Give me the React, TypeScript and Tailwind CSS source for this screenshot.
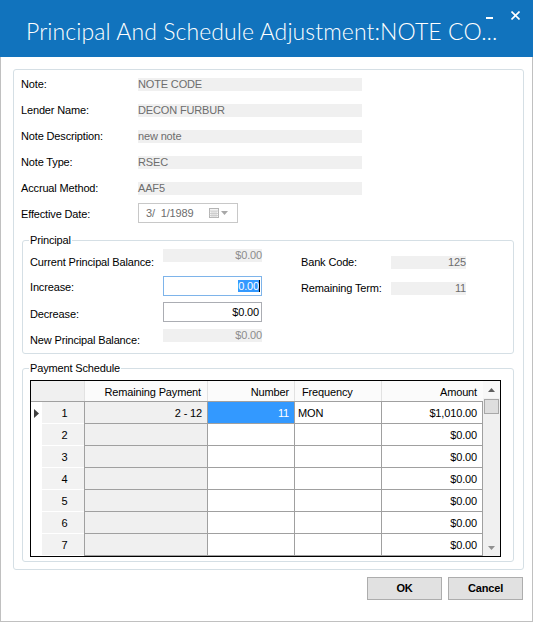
import type { ReactNode } from 'react'

const rows = [
  { n: 1, rem: '2 - 12', num: '11', freq: 'MON', amt: '$1,010.00', current: true },
  { n: 2, rem: '', num: '', freq: '', amt: '$0.00' },
  { n: 3, rem: '', num: '', freq: '', amt: '$0.00' },
  { n: 4, rem: '', num: '', freq: '', amt: '$0.00' },
  { n: 5, rem: '', num: '', freq: '', amt: '$0.00' },
  { n: 6, rem: '', num: '', freq: '', amt: '$0.00' },
  { n: 7, rem: '', num: '', freq: '', amt: '$0.00' },
]

function InfoRow({ label, value }: { label: string; value: string }) {
  return (
    <div className="flex h-[13px] items-start leading-[13px]">
      <div className="w-[117px]">{label}</div>
      <div className="h-[13px] w-[224px] bg-[#f0f0f0] text-[#6d6d6d]">{value}</div>
    </div>
  )
}

function GroupBox({ title, className, children }: { title: string; className: string; children: ReactNode }) {
  return (
    <div className={`relative ml-[8px] w-[492px] rounded-[3px] border border-[#d5dfe5] ${className}`}>
      <span className="absolute left-[6px] top-[-7px] bg-white px-[1px] leading-[13px]">{title}</span>
      {children}
    </div>
  )
}

function ReadOnly({ value, className = '' }: { value: string; className?: string }) {
  return <div className={`h-[13px] bg-[#f0f0f0] text-right leading-[13px] ${className}`}>{value}</div>
}

function Principal() {
  return (
    <GroupBox title="Principal" className="mt-[17px] flex h-[114px]">
      <div className="flex w-[239px] flex-col pl-[7px] pt-[8px]">
        <div className="flex h-[20px] items-start">
          <div className="mt-[7px] w-[133px] leading-[13px]">Current Principal Balance:</div>
          <ReadOnly value="$0.00" className="w-[99px] text-[#8c8c8c]" />
        </div>
        <div className="mt-[7px] flex h-[20px] items-start">
          <div className="mt-[5px] w-[133px] leading-[13px]">Increase:</div>
          <div className="flex h-[20px] w-[99px] items-center justify-end border border-[#7eb4ea] pr-[1px]">
            <span className="bg-[#3399ff] leading-[12px] text-white">0.00</span>
            <span className="h-[12px] w-px bg-black" />
          </div>
        </div>
        <div className="mt-[6px] flex h-[20px] items-start">
          <div className="mt-[6px] w-[133px] leading-[13px]">Decrease:</div>
          <div className="flex h-[20px] w-[99px] items-center justify-end border border-[#abadb3] pr-[2px] leading-[13px]">
            $0.00
          </div>
        </div>
        <div className="mt-[7px] flex h-[18px] items-start">
          <div className="mt-[5px] w-[133px] leading-[13px]">New Principal Balance:</div>
          <ReadOnly value="$0.00" className="w-[99px] text-[#8c8c8c]" />
        </div>
      </div>
      <div className="ml-[39px] flex flex-col gap-[13px] pt-[15px]">
        <div className="flex h-[13px] items-start leading-[13px]">
          <div className="w-[90px]">Bank Code:</div>
          <ReadOnly value="125" className="w-[75px] text-[#6d6d6d]" />
        </div>
        <div className="flex h-[13px] items-start leading-[13px]">
          <div className="w-[90px]">Remaining Term:</div>
          <ReadOnly value="11" className="w-[75px] text-[#6d6d6d]" />
        </div>
      </div>
    </GroupBox>
  )
}

function Grid() {
  return (
    <div className="ml-[7px] mt-[11px] flex h-[177px] w-[471px] border border-black">
      <div className="flex w-[452px] flex-col overflow-hidden">
        <div className="flex h-[21px] shrink-0 border-b border-[#a0a0a0] bg-[#fbfbfb] leading-[13px]">
          <div className="w-[54px] border-r border-[#e2e2e2] bg-[#f0f0f0]" />
          <div className="flex w-[123px] items-end justify-end border-r border-[#e2e2e2] pb-[2px] pr-[6px]">Remaining Payment</div>
          <div className="flex w-[87px] items-end justify-end border-r border-[#e2e2e2] pb-[2px] pr-[5px]">Number</div>
          <div className="flex w-[87px] items-end border-r border-[#e2e2e2] pb-[2px] pl-[7px]">Frequency</div>
          <div className="flex w-[101px] items-end justify-end pb-[2px] pr-[6px]">Amount</div>
        </div>
        {rows.map((r) => (
          <div key={r.n} className="flex h-[22px] shrink-0 leading-[13px]">
            <div className="flex w-[54px] border-r border-[#a0a0a0] bg-white">
              <div className="flex w-[11px] items-center justify-center pt-[1px]">
                {r.current && (
                  <svg width="5" height="9" viewBox="0 0 5 9">
                    <path d="M0 0 L5 4.5 L0 9 Z" fill="#404040" />
                  </svg>
                )}
              </div>
              <div className="flex flex-1 items-center justify-center border-b border-white bg-[#f2f2f2] pl-[3px] pt-[2px]">{r.n}</div>
            </div>
            <div className="flex w-[123px] items-center justify-end border-b border-r border-[#a0a0a0] bg-[#f0f0f0] pr-[5px] pt-[2px]">
              {r.rem}
            </div>
            <div
              className={`flex w-[87px] items-center justify-end border-b border-r border-[#a0a0a0] pr-[5px] pt-[2px] ${
                r.current ? 'bg-[#3399ff] text-white' : 'bg-white'
              }`}
            >
              {r.num}
            </div>
            <div className="flex w-[87px] items-center border-b border-r border-[#a0a0a0] pl-[3px] pt-[2px]">{r.freq}</div>
            <div className="flex w-[101px] items-center justify-end border-b border-r border-[#a0a0a0] pr-[5px] pt-[2px]">
              {r.amt}
            </div>
          </div>
        ))}
      </div>
      <div className="flex w-[17px] flex-col bg-[#f0f0f0]">
        <div className="flex h-[17px] items-center justify-center bg-[#f7f7f7]">
          <svg width="7" height="4" viewBox="0 0 7 4">
            <path d="M0 4 L3.5 0 L7 4 Z" fill="#606060" />
          </svg>
        </div>
        <div className="mx-[1px] mt-[1px] h-[15px] border border-[#a8a8a8] bg-[#dedede]" />
        <div className="flex-1" />
        <div className="flex h-[17px] items-center justify-center">
          <svg width="7" height="4" viewBox="0 0 7 4">
            <path d="M0 0 L7 0 L3.5 4 Z" fill="#909090" />
          </svg>
        </div>
      </div>
    </div>
  )
}

export default function App() {
  return (
    <div className="flex h-[622px] w-[533px] flex-col bg-white font-['Liberation_Sans',Arial,sans-serif] text-[11px] tracking-[-0.15px] text-black">
      <div className="relative flex h-[57px] shrink-0 items-start bg-[#1173bd] text-white">
        <div className="ml-[26px] mt-[16px] whitespace-nowrap font-['Lato',sans-serif] text-[23px] font-light leading-[30px] tracking-[0.1px]">
          Principal And Schedule Adjustment:NOTE CO...
        </div>
        <svg className="absolute left-[486px] top-[17px]" width="7" height="2" viewBox="0 0 7 2">
          <rect width="7" height="2" fill="white" />
        </svg>
        <svg className="absolute left-[511px] top-[11px]" width="9" height="9" viewBox="0 0 9 9">
          <path d="M0.5 0.5 L8.5 8.5 M8.5 0.5 L0.5 8.5" stroke="white" strokeWidth="1.6" />
        </svg>
      </div>
      <div className="flex flex-1 flex-col border-x border-b border-[#c0c0c0]">
        <div className="ml-[12px] mt-[12px] flex h-[501px] w-[511px] flex-col rounded-[3px] border border-[#d5dfe5] pt-[8px]">
          <div className="flex flex-col gap-[13px] pl-[7px]">
            <InfoRow label="Note:" value="NOTE CODE" />
            <InfoRow label="Lender Name:" value="DECON FURBUR" />
            <InfoRow label="Note Description:" value="new note" />
            <InfoRow label="Note Type:" value="RSEC" />
            <InfoRow label="Accrual Method:" value="AAF5" />
          </div>
          <div className="mt-[8px] flex h-[20px] items-center pl-[7px] leading-[13px]">
            <div className="w-[117px] pt-[2px]">Effective Date:</div>
            <div className="flex h-[20px] w-[100px] items-center border border-[#c8c8c8] pl-[7px] text-[#6d6d6d]">
              <span className="whitespace-pre">3/  1/1989</span>
              <svg className="ml-[16px]" width="10" height="10" viewBox="0 0 10 10">
                <rect x="0.5" y="0.5" width="9" height="9" fill="#f4f4f4" stroke="#b4b4b4" />
                <path d="M0.5 3 H9.5 M0.5 5.5 H9.5 M0.5 7.5 H9.5 M3 3 V9.5 M5 3 V9.5 M7 3 V9.5" stroke="#c8c8c8" strokeWidth="0.8" />
              </svg>
              <svg className="ml-[2px]" width="7" height="4" viewBox="0 0 7 4">
                <path d="M0 0 L7 0 L3.5 4 Z" fill="#a8a8a8" />
              </svg>
            </div>
          </div>
          <Principal />
          <GroupBox title="Payment Schedule" className="mt-[14px] h-[194px]">
            <Grid />
          </GroupBox>
        </div>
        <div className="ml-[12px] mt-[7px] flex w-[511px] justify-end gap-[6px] pr-[1px]">
          <button className="h-[23px] w-[75px] border border-[#adadad] bg-[#e1e1e1] font-bold">OK</button>
          <button className="h-[23px] w-[75px] border border-[#adadad] bg-[#e1e1e1] font-bold">Cancel</button>
        </div>
      </div>
    </div>
  )
}
